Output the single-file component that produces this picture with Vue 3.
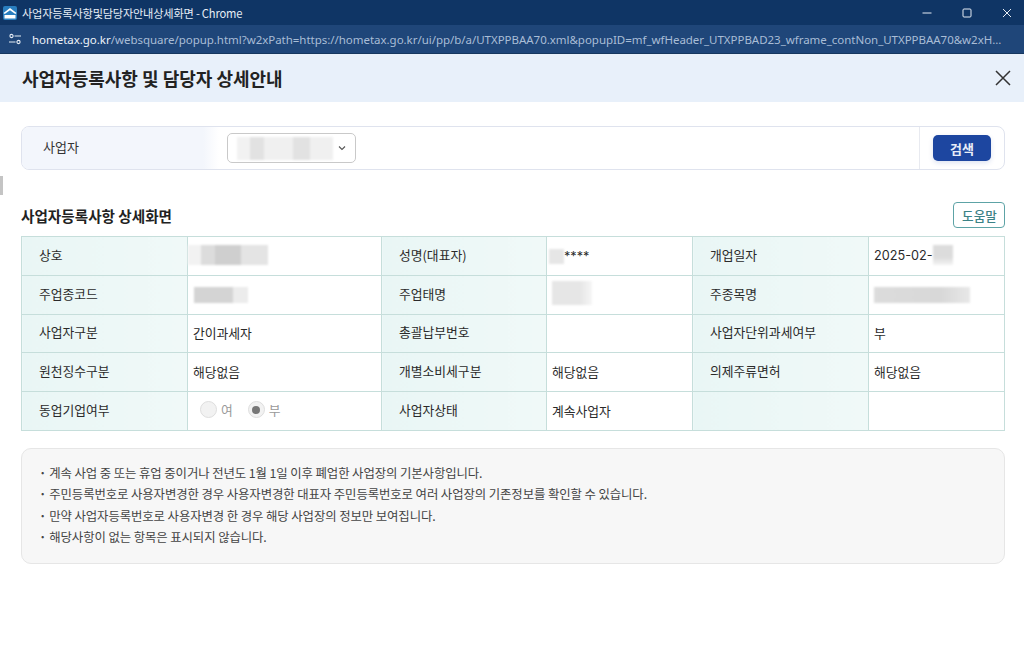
<script setup>
const rows = [
  [
    { label: '상호', blur: 'b-name' },
    { label: '성명(대표자)', blur: 'b-rep', text: '****', latin: true },
    { label: '개업일자', text: '2025-02-', blur: 'b-date', after: true, latin: true }
  ],
  [
    { label: '주업종코드', blur: 'b-code' },
    { label: '주업태명', blur: 'b-biz' },
    { label: '주종목명', blur: 'b-item' }
  ],
  [
    { label: '사업자구분', text: '간이과세자' },
    { label: '총괄납부번호' },
    { label: '사업자단위과세여부', text: '부' }
  ],
  [
    { label: '원천징수구분', text: '해당없음' },
    { label: '개별소비세구분', text: '해당없음' },
    { label: '의제주류면허', text: '해당없음' }
  ],
  [
    { label: '동업기업여부', radio: true },
    { label: '사업자상태', text: '계속사업자' },
    { label: '' }
  ]
]

const notes = [
  '계속 사업 중 또는 휴업 중이거나 전년도 1월 1일 이후 폐업한 사업장의 기본사항입니다.',
  '주민등록번호로 사용자변경한 경우 사용자변경한 대표자 주민등록번호로 여러 사업장의 기존정보를 확인할 수 있습니다.',
  '만약 사업자등록번호로 사용자변경 한 경우 해당 사업장의 정보만 보여집니다.',
  '해당사항이 없는 항목은 표시되지 않습니다.'
]
</script>

<template>
  <div class="window">
    <div class="titlebar">
      <svg class="favicon" width="14" height="14" viewBox="0 0 14 14">
        <rect width="14" height="14" rx="2" fill="#2a7fc0" />
        <path d="M0.5 7 7 2l6.5 5-1.2 1L7 4.2 1.7 8z" fill="#fff" />
        <rect x="1.5" y="9" width="11" height="3.5" fill="#fff" />
      </svg>
      <span class="wintitle">사업자등록사항및담당자안내상세화면 - Chrome</span>
      <div class="winbtns">
        <svg width="12" height="12" viewBox="0 0 12 12"><path d="M1.5 6h9" stroke="#e6edf5" stroke-width="1" /></svg>
        <svg width="12" height="12" viewBox="0 0 12 12"><rect x="2" y="2" width="8" height="8" rx="1" fill="none" stroke="#e6edf5" /></svg>
        <svg width="12" height="12" viewBox="0 0 12 12"><path d="M2 2l8 8M10 2l-8 8" stroke="#e6edf5" stroke-width="1" /></svg>
      </div>
    </div>
    <div class="addressbar">
      <svg class="tune" width="14" height="12" viewBox="0 0 14 12">
        <circle cx="3.5" cy="3" r="1.6" fill="none" stroke="#e6edf5" stroke-width="1.1" />
        <path d="M6.5 3H13M1 9h6.5" stroke="#e6edf5" stroke-width="1.1" />
        <circle cx="10.5" cy="9" r="1.6" fill="none" stroke="#e6edf5" stroke-width="1.1" />
      </svg>
      <span class="url"><b>hometax.go.kr</b>/websquare/popup.html?w2xPath=https://hometax.go.kr/ui/pp/b/a/UTXPPBAA70.xml&amp;popupID=mf_wfHeader_UTXPPBAD23_wframe_contNon_UTXPPBAA70&amp;w2xH...</span>
    </div>

    <header class="pop-head">
      <h1>사업자등록사항 및 담당자 상세안내</h1>
      <svg width="18" height="18" viewBox="0 0 18 18"><path d="M2 2l14 14M16 2L2 16" stroke="#333" stroke-width="1.5" /></svg>
    </header>

    <main class="content">
      <span class="edge-mark"></span>
      <section class="search">
        <div class="search-label"><span>사업자</span></div>
        <div class="search-field">
          <div class="select">
            <span class="blur b-select"></span>
            <svg width="8" height="6" viewBox="0 0 8 6"><path d="M1 1.5 4 4.5l3-3" fill="none" stroke="#555" stroke-width="1.1" /></svg>
          </div>
        </div>
        <div class="search-action"><button class="btn-search">검색</button></div>
      </section>

      <div class="sec-head">
        <h2>사업자등록사항 상세화면</h2>
        <button class="btn-help">도움말</button>
      </div>

      <table class="info">
        <colgroup>
          <col style="width:166px" /><col style="width:194px" />
          <col style="width:165px" /><col style="width:146px" />
          <col style="width:176px" /><col />
        </colgroup>
        <tbody>
          <tr v-for="(row, i) in rows" :key="i">
            <template v-for="(cell, j) in row" :key="j">
              <th>{{ cell.label }}</th>
              <td>
                <div v-if="cell.radio" class="radios">
                  <span class="radio"></span><span class="radio-txt">여</span>
                  <span class="radio on"></span><span class="radio-txt">부</span>
                </div>
                <template v-else>
                  <span v-if="cell.blur && !cell.after" class="blur" :class="cell.blur"></span>
                  <span v-if="cell.text" :class="{ latin: cell.latin }">{{ cell.text }}</span>
                  <span v-if="cell.blur && cell.after" class="blur" :class="cell.blur"></span>
                </template>
              </td>
            </template>
          </tr>
        </tbody>
      </table>

      <ul class="notes">
        <li v-for="n in notes" :key="n">{{ n }}</li>
      </ul>
    </main>
  </div>
</template>

<style>
html, body {
  margin: 0;
  background: #fff;
}
</style>

<style scoped>
.window {
  width: 1024px;
  height: 650px;
  overflow: hidden;
  background: #fff;
  font-family: "Noto Sans CJK KR", "Noto Sans", sans-serif;
  color: #222;
}

.titlebar {
  height: 25px;
  background: #0f3565;
  display: flex;
  align-items: center;
  padding-left: 3px;
  color: #e6edf5;
  font-size: 11.2px;
}

.favicon {
  flex: none;
  margin-right: 5px;
}

.wintitle {
  letter-spacing: -0.2px;
}

.winbtns {
  margin-left: auto;
  display: flex;
  gap: 28px;
  padding-right: 11px;
}

.addressbar {
  height: 29px;
  box-sizing: border-box;
  background: #1f4679;
  border-bottom: 1px solid #16375f;
  display: flex;
  align-items: center;
  padding: 0 19px 0 8px;
  font-family: "Noto Sans", sans-serif;
  font-size: 11.5px;
  color: #a9bdd6;
  white-space: nowrap;
}

.tune {
  flex: none;
  margin-right: 10px;
}

.url {
  min-width: 0;
  overflow: hidden;
  letter-spacing: -0.03px;
}

.url b {
  color: #eef3f9;
  font-weight: 400;
}

.pop-head {
  height: 48px;
  background: #e8f0fa;
  display: flex;
  align-items: center;
  justify-content: space-between;
  padding: 0 12px 0 22px;
}

.pop-head h1 {
  margin: 0;
  font-size: 18px;
  font-weight: 600;
  color: #222;
}

.content {
  position: relative;
  padding: 24px 19px 0 21px;
}

.edge-mark {
  position: absolute;
  left: 0;
  top: 74px;
  width: 3px;
  height: 19px;
  background: #c4c4c4;
  filter: blur(0.5px);
}

.search {
  height: 44px;
  box-sizing: border-box;
  border: 1px solid #dfe3ee;
  border-radius: 8px;
  display: flex;
  overflow: hidden;
}

.search-label {
  width: 197px;
  box-sizing: border-box;
  padding-left: 21px;
  display: flex;
  align-items: center;
  font-size: 13px;
  color: #333;
  background: linear-gradient(to right, #f3f6fc 92%, #fff);
}

.search-label span {
  margin-top: -4px;
}

.search-field {
  flex: 1;
  display: flex;
  align-items: center;
  padding-left: 8px;
}

.select {
  width: 129px;
  height: 30px;
  box-sizing: border-box;
  border: 1px solid #c9c9c9;
  border-radius: 5px;
  display: flex;
  align-items: center;
  justify-content: space-between;
  padding: 0 9px;
}

.search-action {
  width: 85px;
  border-left: 1px solid #e8eaf0;
  display: flex;
  align-items: center;
  padding-left: 13px;
  box-sizing: border-box;
}

.btn-search {
  width: 58px;
  height: 26px;
  padding: 0;
  border: 0;
  border-radius: 5px;
  background: #1d46a0;
  color: #e8edf7;
  font: 600 13px "Noto Sans CJK KR", sans-serif;
  box-shadow: 0 2px 5px rgba(29, 70, 160, 0.15);
}

.sec-head {
  display: flex;
  align-items: center;
  justify-content: space-between;
  margin-top: 32px;
  height: 26px;
}

.sec-head h2 {
  margin: 0;
  font-size: 14.6px;
  font-weight: 600;
  color: #222;
}

.btn-help {
  width: 52px;
  height: 26px;
  padding: 0 0 0 1px;
  box-sizing: border-box;
  background: #fff;
  border: 1px solid #5da3a6;
  border-radius: 4px;
  color: #3b8286;
  font: 500 12.6px "Noto Sans CJK KR", sans-serif;
}

.info {
  width: 984px;
  margin-top: 8px;
  border-collapse: collapse;
  table-layout: fixed;
  font-size: 12.8px;
}

.info tr {
  height: 38.8px;
}

.info th,
.info td {
  border: 1px solid #c6dedb;
  padding: 0 0 3px 5px;
  font-weight: 400;
  text-align: left;
  color: #2a2a2a;
}

.info th {
  background: linear-gradient(to right, #e9f6f5, #f0f9f8);
  padding-left: 17px;
}

.info td span {
  vertical-align: middle;
}

.latin {
  font-family: Inter, sans-serif;
  font-size: 12.7px;
}

.blur {
  display: inline-block;
  height: 20px;
  background: linear-gradient(to right, #f0f0f0, #dadada 40%, #e0e0e0 70%, #f3f3f3);
  filter: blur(1px);
}

.b-select {
  width: 96px;
  height: 23px;
  background: linear-gradient(to right, #f2f2f2 14%, #e2e2e2 14% 28%, #f0f0f0 28% 58%, #e2e2e2 58% 76%, #f0f0f0 76%);
}
.b-name {
  width: 80px;
  margin-left: -5px;
  background: linear-gradient(to right, #f2f2f2 16%, #dcdcdc 16% 34%, #cfcfcf 34% 66%, #e4e4e4 66%);
}
.b-rep { width: 15px; height: 15px; margin: 0 0 0 -3px; background: #e6e6e6; }
.b-date { width: 20px; background: linear-gradient(#dcdcdc 60%, #f4f4f4); }
.b-code { width: 54px; height: 16px; margin-left: 1px; background: linear-gradient(to right, #d4d4d4 72%, #ececec 72%); }
.b-biz { width: 40px; height: 24px; background: linear-gradient(to right, #e6e6e6 70%, #f6f6f6); }
.b-item { width: 96px; height: 16px; background: linear-gradient(to right, #dcdcdc, #d8d8d8 70%, #e8e8e8); }

.radios {
  display: flex;
  align-items: center;
  padding-left: 7px;
}

.radio {
  width: 15px;
  height: 15px;
  border-radius: 50%;
  border: 1px solid #dedede;
  background: #f2f2f2;
  position: relative;
}

.radio.on {
  margin-left: 15px;
}

.radio.on::after {
  content: "";
  position: absolute;
  left: 3.5px;
  top: 3.5px;
  width: 8px;
  height: 8px;
  border-radius: 50%;
  background: #777;
}

.radio-txt {
  margin-left: 4px;
  color: #999;
}

.notes {
  list-style: none;
  margin: 17px 0 0;
  padding: 14px 16px 14px 17px;
  height: 116px;
  box-sizing: border-box;
  background: #f7f7f7;
  border: 1px solid #e6e6e6;
  border-radius: 10px;
  font-size: 12.4px;
  color: #444;
}

.notes li {
  height: 21.3px;
  line-height: 21px;
  letter-spacing: -0.1px;
}

.notes li::before {
  content: "·";
  margin-right: 3px;
  font-weight: 700;
}
</style>
